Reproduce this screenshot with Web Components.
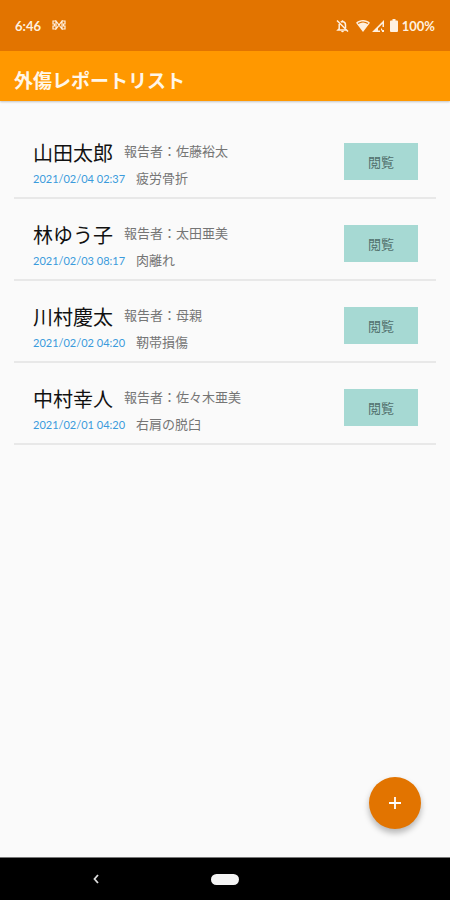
<!DOCTYPE html>
<html lang="ja">
<head>
<meta charset="utf-8">
<meta name="viewport" content="width=device-width, initial-scale=1">
<title>外傷レポートリスト</title>
<style>
html, body { margin: 0; height: 100%; }
body { font-family: "Noto Sans CJK JP", sans-serif; background: #fafafa; }
</style>
</head>
<body>
<report-app>
  <status-bar slot="top" time="6:46" battery="100%"></status-bar>
  <app-header slot="top">外傷レポートリスト</app-header>
  <report-item>
    <span slot="name">山田太郎</span><span slot="reporter">佐藤裕太</span>
    <time slot="date">2021/02/04 02:37</time><span slot="injury">疲労骨折</span>
  </report-item>
  <report-item>
    <span slot="name">林ゆう子</span><span slot="reporter">太田亜美</span>
    <time slot="date">2021/02/03 08:17</time><span slot="injury">肉離れ</span>
  </report-item>
  <report-item>
    <span slot="name">川村慶太</span><span slot="reporter">母親</span>
    <time slot="date">2021/02/02 04:20</time><span slot="injury">靭帯損傷</span>
  </report-item>
  <report-item>
    <span slot="name">中村幸人</span><span slot="reporter">佐々木亜美</span>
    <time slot="date">2021/02/01 04:20</time><span slot="injury">右肩の脱臼</span>
  </report-item>
  <add-button slot="action"></add-button>
  <nav-bar slot="bottom"></nav-bar>
</report-app>

<template id="report-app">
  <style>
    :host { display: flex; flex-direction: column; min-height: 100vh; background: #fafafa; }
    header { position: relative; box-shadow: 0 1px 2px rgba(0,0,0,.22); }
    main { position: relative; flex: 1; padding: 16px 14px 88px; }
    .action { position: absolute; right: 29px; bottom: 28px; }
  </style>
  <header><slot name="top"></slot></header>
  <main><slot></slot><div class="action"><slot name="action"></slot></div></main>
  <slot name="bottom"></slot>
</template>

<template id="status-bar">
  <style>
    :host { display: flex; align-items: center; height: 51px; padding: 0 15px; box-sizing: border-box;
      background: #e27400; color: #fff0df; font: 700 13px/20px Lato, sans-serif; }
    svg { display: block; fill: currentColor; }
    .mail { margin: 0 0 2px 11px; }
    .right { display: flex; align-items: center; margin-left: auto; }
    .wifi { margin-left: 7px; }
    .signal { margin-left: 2px; }
    .battery { margin: 0 4px 0 6px; }
  </style>
  <span class="time"></span>
  <svg class="mail" width="14" height="10" viewBox="0 0 14 10" aria-hidden="true"><path fill="none" stroke="currentColor" stroke-width="1.2" d="M4 1H1v3h1.500v2H1v3h3M10 1h3v3h-1.500v2H13v3h-3M4 1v8L10 1v8z"/></svg>
  <div class="right">
    <svg width="13" height="14" viewBox="0 0 13 14" aria-hidden="true"><path fill="none" stroke="currentColor" stroke-width="1.5" d="M1 1.500l11 11M3.200 5v4.800L2 11h8M4.800 3.200c.5-.4 1-.6 1.700-.7V1.200M6.500 2.500c2 .3 3 1.700 3 3.500v3"/><path d="M5.200 12h2.600a1.300 1.300 0 0 1-2.600 0z"/></svg>
    <svg class="wifi" width="14" height="12" viewBox="0 0 14 12" aria-hidden="true"><path fill-rule="evenodd" d="M7 0c2.700 0 5.100 1 7 2.700L7 12 0 2.700C1.900 1 4.300 0 7 0zm0 1.500c-2 0-3.800.6-5.300 1.500l.7 1a8 8 0 0 1 9.200 0l.7-1A9 9 0 0 0 7 1.500z"/></svg>
    <svg class="signal" width="12" height="12" viewBox="0 0 12 12" aria-hidden="true"><path fill-rule="evenodd" d="M12 0v7h-1.500V3.700L6 8.200V10.500h2V12H0z"/><path d="M9 8l1.500 1.500L9 11zM10 10h2v2h-2z"/></svg>
    <svg class="battery" width="8" height="13" viewBox="0 0 8 13" aria-hidden="true"><path d="M2.500 0h3v1.500H7a1 1 0 0 1 1 1V12a1 1 0 0 1-1 1H1a1 1 0 0 1-1-1V2.500a1 1 0 0 1 1-1h1.500z"/></svg>
    <span class="level"></span>
  </div>
</template>

<template id="app-header">
  <style>
    :host { display: block; padding: 17px 14px 9px; background: #ff9800; color: #fff6e8; }
    h1 { margin: 0; font-size: 19px; line-height: 24px; font-weight: 700; }
  </style>
  <h1><slot></slot></h1>
</template>

<template id="report-item">
  <style>
    :host { display: flex; align-items: flex-end; justify-content: space-between; min-height: 82px; box-sizing: border-box;
      padding: 8px 18px 0 19px; border-bottom: 2px solid #e8e8e8; }
    .text { padding-bottom: 6px; }
    .line { display: flex; align-items: center; gap: 11px; font-size: 13px; line-height: 24px; color: #757575; }
    .name { font-size: 20px; line-height: 28px; padding-top: 2px; color: #111; }
    .reporter { align-self: flex-start; padding-top: 2px; }
    .date { font: 11px/24px Lato, sans-serif; padding-top: 2px; color: #3a9bdc; }
    .detail { margin-top: -2px; }
    button { width: 74px; height: 37px; margin-bottom: 17px; padding: 0; border: 0; background: #a6d9d3; color: #52706d;
      font: 13px/20px "Noto Sans CJK JP", sans-serif; }
  </style>
  <div class="text">
    <div class="line"><span class="name"><slot name="name"></slot></span><span class="reporter">報告者：<slot name="reporter"></slot></span></div>
    <div class="line detail"><span class="date"><slot name="date"></slot></span><slot name="injury"></slot></div>
  </div>
  <button type="button">閲覧</button>
</template>

<template id="add-button">
  <style>
    :host { display: block; }
    button { display: grid; place-items: center; width: 52px; height: 52px; padding: 0; border: 0; border-radius: 50%;
      background: #e27400; box-shadow: 0 4px 6px rgba(0,0,0,.28); }
  </style>
  <button type="button" aria-label="追加"><svg width="14" height="14" viewBox="0 0 14 14" aria-hidden="true"><path d="M7 1v12M1 7h12" stroke="#fff" stroke-width="1.800"/></svg></button>
</template>

<template id="nav-bar">
  <style>
    :host { display: grid; grid-template-columns: 1fr 28px 1fr; align-items: center; height: 43px; box-sizing: border-box;
      border-top: 1px solid #777; background: #000; }
    button { padding: 0; border: 0; background: none; }
    .back { display: grid; place-items: center; width: 24px; height: 24px; margin-left: 84px; }
    .home { width: 28px; height: 11px; border-radius: 6px; background: #f4f4f4; }
  </style>
  <button class="back" type="button" aria-label="戻る"><svg width="8" height="12" viewBox="0 0 8 12" aria-hidden="true"><path d="M6 2L2.500 6 6 10" fill="none" stroke="#ddd" stroke-width="1.800"/></svg></button>
  <button class="home" type="button" aria-label="ホーム"></button>
</template>

<script>
class TemplateElement extends HTMLElement {
  constructor() {
    super();
    const template = document.getElementById(this.localName);
    this.attachShadow({ mode: "open" }).append(template.content.cloneNode(true));
  }
}
class StatusBar extends TemplateElement {
  connectedCallback() {
    this.shadowRoot.querySelector(".time").textContent = this.getAttribute("time");
    this.shadowRoot.querySelector(".level").textContent = this.getAttribute("battery");
  }
}
customElements.define("status-bar", StatusBar);
for (const name of ["report-app", "app-header", "report-item", "add-button", "nav-bar"]) {
  customElements.define(name, class extends TemplateElement {});
}
</script>
</body>
</html>
